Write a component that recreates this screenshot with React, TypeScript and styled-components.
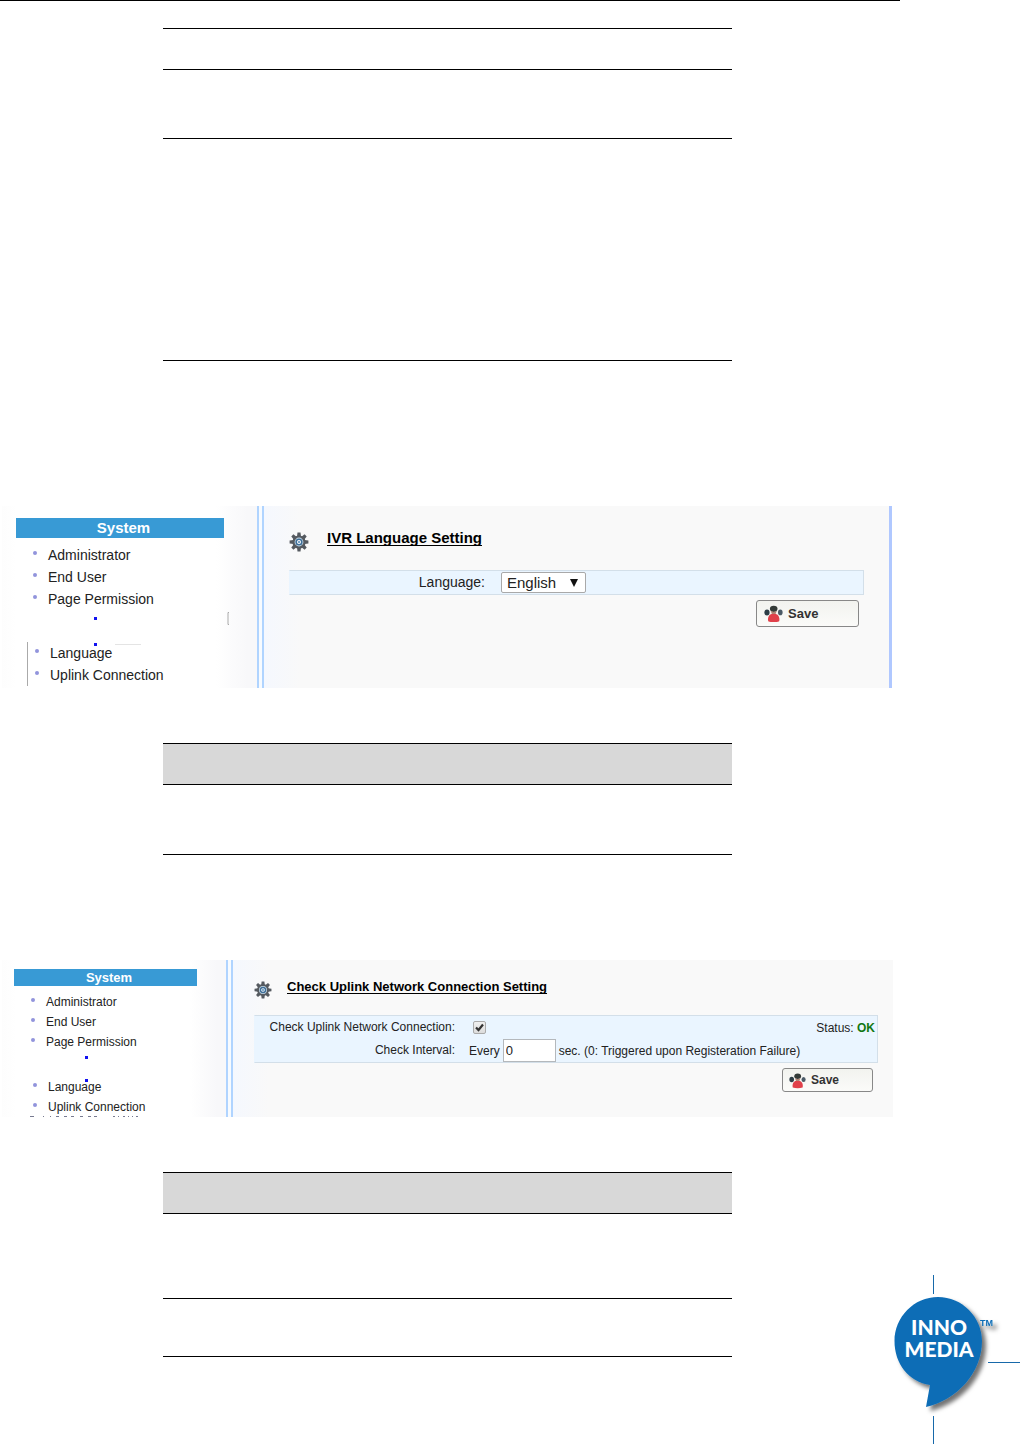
import React, { useState } from "react";
import styled, { createGlobalStyle } from "styled-components";

const GlobalStyle = createGlobalStyle`
  * { box-sizing: border-box; }
  body {
    margin: 0;
    background: #fff;
    color: #222;
    font-family: "Liberation Sans", Arial, sans-serif;
  }
`;

const Page = styled.div`
  display: grid;
  grid-template-columns: minmax(0, 1fr) 128px;
`;

const TopRule = styled.hr`
  grid-column: 1 / -1;
  width: calc(100% - 121px);
  height: 1px;
  margin: 0;
  border: 0;
  background: #000;
`;

const Content = styled.main`
  min-width: 0;
  padding: 27px 0 88px;
`;

const LogoColumn = styled.aside`
  display: flex;
  align-items: flex-end;
`;

const Ruled = styled.div<{ $gap: number }>`
  margin: 0 161px ${(p) => p.$gap}px 163px;
  border-top: 1px solid #000;
`;

const RuledRow = styled.div<{ $height: number; $shaded?: boolean }>`
  height: ${(p) => p.$height}px;
  border-bottom: 1px solid #000;
  background: ${(p) => (p.$shaded ? "#d8d8d8" : "#fff")};
`;

const Panel = styled.section<{ $height: number; $gap: number; $edge?: boolean }>`
  display: flex;
  min-height: ${(p) => p.$height}px;
  margin: 0 ${(p) => (p.$edge ? 1 : 0)}px ${(p) => p.$gap}px 2px;
  border-right: ${(p) => (p.$edge ? "3px solid #b0c8ff" : "0")};
  background: #f9f9f9;
`;

const Sidebar = styled.nav<{ $width: number; $pad: string }>`
  flex: none;
  width: ${(p) => p.$width}px;
  padding: ${(p) => p.$pad};
  background: linear-gradient(to right, #fdfdfd 0, #fff 14px, #fff 84%, #f8f8fa 96%);
`;

const Divider = styled.div`
  flex: none;
  width: 7px;
  border: solid #b0d4ff;
  border-width: 0 2px;
  background: #f7fbff;
`;

const MenuTitle = styled.h2<{ $size: number; $height: number }>`
  margin: 0 0 6px;
  padding-left: 7px;
  background: #389ad5;
  color: #fff;
  text-align: center;
  font-size: ${(p) => p.$size}px;
  line-height: ${(p) => p.$height}px;
`;

const Menu = styled.ul<{ $lower?: boolean; $line?: boolean }>`
  list-style: none;
  margin: 0 0 0 ${(p) => (p.$lower ? 11 : 0)}px;
  padding: 0 0 0 ${(p) => (p.$lower ? 7 : 17)}px;
  border-left: ${(p) => (p.$lower ? `1px solid ${p.$line ? "#aaa" : "transparent"}` : "0")};
`;

const MenuItem = styled.li<{ $size: number; $height: number }>`
  display: flex;
  align-items: center;
  gap: 11px;
  font-size: ${(p) => p.$size}px;
  line-height: ${(p) => p.$height}px;
  white-space: nowrap;

  &::before {
    content: "";
    width: 4px;
    height: 4px;
    margin-bottom: 4px;
    border-radius: 2px;
    background: #9294dc;
  }
`;

const Ellipsis = styled.svg`
  display: block;
  overflow: visible;
`;

const Settings = styled.form<{ $pad: string }>`
  flex: 1;
  min-width: 0;
  display: flex;
  flex-direction: column;
  padding: ${(p) => p.$pad};
  background: linear-gradient(to right, #f5f8fe 0, #f9f9f9 36px);
`;

const Heading = styled.div<{ $gap: number; $space: number }>`
  display: flex;
  align-items: flex-start;
  gap: ${(p) => p.$gap}px;
  margin-bottom: ${(p) => p.$space}px;

  svg { margin-top: 4px; }
`;

const Title = styled.h1<{ $size: number }>`
  margin: 0;
  color: #000;
  font-size: ${(p) => p.$size}px;
  line-height: 20px;
  text-decoration: underline;
  text-underline-offset: 2px;
  text-decoration-skip-ink: none;
`;

const Fields = styled.div<{ $label: number; $size: number }>`
  --label: ${(p) => p.$label}px;
  border: 1px solid #d3dfe9;
  border-left-color: #eaf5ff;
  background: #eaf5ff;
  font-size: ${(p) => p.$size}px;
`;

const Field = styled.div<{ $gap: number }>`
  display: grid;
  grid-template-columns: var(--label) 1fr auto;
  align-items: center;
  column-gap: ${(p) => p.$gap}px;
  height: 23px;
  white-space: nowrap;

  > label {
    padding-bottom: 2px;
    text-align: right;
  }
`;

const Inline = styled.div`
  display: flex;
  align-items: center;
  gap: 3px;
`;

const SelectBox = styled.div`
  display: grid;
  align-items: center;
  width: 85px;

  > * { grid-area: 1 / 1; }
  > svg { justify-self: end; margin-right: 8px; pointer-events: none; }
`;

const Select = styled.select`
  appearance: none;
  width: 100%;
  height: 21px;
  padding: 0 5px;
  border: 1px solid #a9a9a9;
  border-radius: 2px;
  background: #fff;
  color: #222;
  font: 15px "Liberation Sans", Arial, sans-serif;
`;

const CheckBox = styled.span`
  display: grid;
  width: 13px;
  height: 13px;
  margin-left: 4px;

  > * { grid-area: 1 / 1; }
  > svg { pointer-events: none; }
  input:not(:checked) + svg { visibility: hidden; }
`;

const CheckInput = styled.input`
  appearance: none;
  width: 13px;
  height: 13px;
  margin: 0;
  border: 1px solid #aaa;
  border-radius: 2px;
  background: linear-gradient(#f0f0f0, #dcdcdc);
`;

const NumberInput = styled.input`
  width: 53px;
  height: 23px;
  padding: 0 2px;
  border: 1px solid #b4b8bc;
  background: #fff;
  color: #222;
  font: 13px "Liberation Sans", Arial, sans-serif;
`;

const Status = styled.span`
  padding-right: 2px;
  strong { color: #117711; }
`;

const SaveButton = styled.button<{ $small?: boolean }>`
  align-self: flex-end;
  display: flex;
  align-items: center;
  gap: 5px;
  width: ${(p) => (p.$small ? 91 : 103)}px;
  height: ${(p) => (p.$small ? 24 : 27)}px;
  margin: 5px 5px 0 0;
  padding: 0 0 0 ${(p) => (p.$small ? 6 : 7)}px;
  border: 1px solid #888;
  border-radius: 3px;
  background: linear-gradient(#f2f3ef, #fbfbf9);
  color: #333;
  font: bold ${(p) => (p.$small ? 12 : 13)}px "Liberation Sans", Arial, sans-serif;
`;

function Gear({ size }: { size: number }) {
  return (
    <svg width={size} height={size} viewBox="0 0 20 20" aria-hidden="true">
      <g fill="#555a60">
        {[0, 45, 90, 135, 180, 225, 270, 315].map((a) => (
          <path key={a} d="M8 4.500 8.500.6h3l.5 3.900z" transform={`rotate(${a} 10 10)`} />
        ))}
      </g>
      <circle cx="10" cy="10" r="5.500" fill="#c9dcea" stroke="#555a60" strokeWidth="2.200" />
      <circle cx="10" cy="10" r="2.800" fill="#fff" stroke="#3f6f98" strokeWidth="1.600" />
      <circle cx="10" cy="10" r="1" fill="#4b87b8" />
    </svg>
  );
}

function People({ size }: { size: number }) {
  return (
    <svg width={size} height={size} viewBox="0 0 19 19" aria-hidden="true">
      <ellipse cx="3" cy="8.400" rx="2.600" ry="3" fill="#2c3d46" />
      <ellipse cx="16.300" cy="8.400" rx="2.300" ry="2.800" fill="#4a5a66" />
      <path d="M4.200 17.200c-1-4 1.300-7.600 5.500-7.600s6.500 3.600 5.500 7.600c-3 1.200-8 1.200-11 0z" fill="#e0404a" />
      <ellipse cx="9.700" cy="4.800" rx="3.800" ry="3.100" fill="#343b38" />
      <path d="M6.600 6.800c1.700 1.400 4.500 1.400 6.200 0l-1.300 3.200H7.900z" fill="#b08474" />
    </svg>
  );
}

function Logo() {
  return (
    <svg width="128" height="170" viewBox="0 0 128 170" role="img" aria-label="InnoMedia">
      <defs>
        <filter id="shadow" x="-20%" y="-20%" width="150%" height="150%">
          <feDropShadow dx="4" dy="4" stdDeviation="2" floodColor="#000" floodOpacity=".55" />
        </filter>
      </defs>
      <path d="M40.500 0V19M40.500 141V169M95 87.500H127" stroke="#1769aa" fill="none" />
      <g filter="url(#shadow)" fill="#106db6">
        <path d="M45 22C69 22 89 42 89 66C89 98 64 125 33 132L37 110C16 107 1.500 89 1.500 66C1.500 42 21 22 45 22Z" />
        <text x="87" y="51" fontFamily="Liberation Sans, sans-serif" fontSize="9" fontWeight="700">TM</text>
      </g>
      <g fill="#fff" textAnchor="middle" fontFamily="Lato, sans-serif" fontWeight="900">
        <text x="46" y="60" fontSize="21">INNO</text>
        <text x="46" y="82" fontSize="21">MEDIA</text>
      </g>
    </svg>
  );
}

interface SystemMenuProps {
  width: number;
  pad: string;
  titleSize: number;
  titleHeight: number;
  size: number;
  line: number;
  gap: number;
  dots: [number, number, number];
  marked?: boolean;
}

function SystemMenu(p: SystemMenuProps) {
  const item = (name: string) => (
    <MenuItem key={name} $size={p.size} $height={p.line}>{name}</MenuItem>
  );
  const [x, first, second] = p.dots;
  return (
    <Sidebar $width={p.width} $pad={p.pad}>
      <MenuTitle $size={p.titleSize} $height={p.titleHeight}>System</MenuTitle>
      <Menu>{["Administrator", "End User", "Page Permission"].map(item)}</Menu>
      <Ellipsis width="100%" height={p.gap} aria-hidden="true">
        <path d={`M${x} ${first}h3v3h-3zM${x} ${second}h3v3h-3z`} fill="#1212f0" />
        {p.marked ? (
          <>
            <path d="M213 2.500h-1v12h1" stroke="#aaa" fill="none" />
            <path d="M99 34.500h26" stroke="#e4e4e4" fill="none" />
          </>
        ) : (
          <path
            d="M16 64.500h4M29 64.500h1M36 64.500h1M42 64.500h3M50 64.500h3M57 64.500h3M66 64.500h3M74 64.500h3M80 64.500h3M99 64.500h2M104 64.500h1M109 64.500h2M114 64.500h1M118 64.500h1M122 64.500h2"
            stroke="#777a90"
            fill="none"
          />
        )}
      </Ellipsis>
      <Menu $lower $line={p.marked}>{["Language", "Uplink Connection"].map(item)}</Menu>
    </Sidebar>
  );
}

export default function App() {
  const [language, setLanguage] = useState("English");
  const [check, setCheck] = useState(true);
  const [interval, setInterval] = useState("0");

  return (
    <>
      <GlobalStyle />
      <Page>
        <TopRule />
        <Content>
          <Ruled $gap={145}>
            <RuledRow $height={41} />
            <RuledRow $height={69} />
            <RuledRow $height={222} />
          </Ruled>

          <Panel $height={182} $gap={55} $edge>
            <SystemMenu width={255} pad="12px 33px 0 14px" titleSize={15} titleHeight={20}
              size={14} line={22} gap={32} dots={[78, 7, 33]} marked />
            <Divider />
            <Settings $pad="22px 25px 0 25px">
              <Heading $gap={18} $space={18}>
                <Gear size={20} />
                <Title $size={15}>IVR Language Setting</Title>
              </Heading>
              <Fields $label={195} $size={14}>
                <Field $gap={16}>
                  <label htmlFor="language">Language:</label>
                  <SelectBox>
                    <Select id="language" value={language} onChange={(e) => setLanguage(e.target.value)}>
                      <option>English</option>
                    </Select>
                    <svg width="8" height="8" aria-hidden="true"><path d="M0 0h8L4 8z" fill="#111" /></svg>
                  </SelectBox>
                </Field>
              </Fields>
              <SaveButton type="button"><People size={19} />Save</SaveButton>
            </Settings>
          </Panel>

          <Ruled $gap={105}>
            <RuledRow $height={41} $shaded />
            <RuledRow $height={70} />
          </Ruled>

          <Panel $height={157} $gap={55}>
            <SystemMenu width={224} pad="9px 29px 0 12px" titleSize={13} titleHeight={17}
              size={12} line={20} gap={25} dots={[71, 4, 27]} />
            <Divider />
            <Settings $pad="17px 15px 0 21px">
              <Heading $gap={15} $space={16}>
                <Gear size={18} />
                <Title $size={13}>Check Uplink Network Connection Setting</Title>
              </Heading>
              <Fields $label={200} $size={12}>
                <Field $gap={14}>
                  <label htmlFor="check">Check Uplink Network Connection:</label>
                  <CheckBox>
                    <CheckInput id="check" type="checkbox" checked={check}
                      onChange={(e) => setCheck(e.target.checked)} />
                    <svg width="13" height="13" aria-hidden="true">
                      <path d="M3 6.500 5.500 9 10 3.500" fill="none" stroke="#333" strokeWidth="2.200" />
                    </svg>
                  </CheckBox>
                  <Status>Status: <strong>OK</strong></Status>
                </Field>
                <Field $gap={14}>
                  <label htmlFor="interval">Check Interval:</label>
                  <Inline>
                    Every
                    <NumberInput id="interval" value={interval} onChange={(e) => setInterval(e.target.value)} />
                    <span>sec. (0: Triggered upon Registeration Failure)</span>
                  </Inline>
                </Field>
              </Fields>
              <SaveButton type="button" $small><People size={17} />Save</SaveButton>
            </Settings>
          </Panel>

          <Ruled $gap={0}>
            <RuledRow $height={41} $shaded />
            <RuledRow $height={85} />
            <RuledRow $height={58} />
          </Ruled>
        </Content>
        <LogoColumn><Logo /></LogoColumn>
      </Page>
    </>
  );
}
